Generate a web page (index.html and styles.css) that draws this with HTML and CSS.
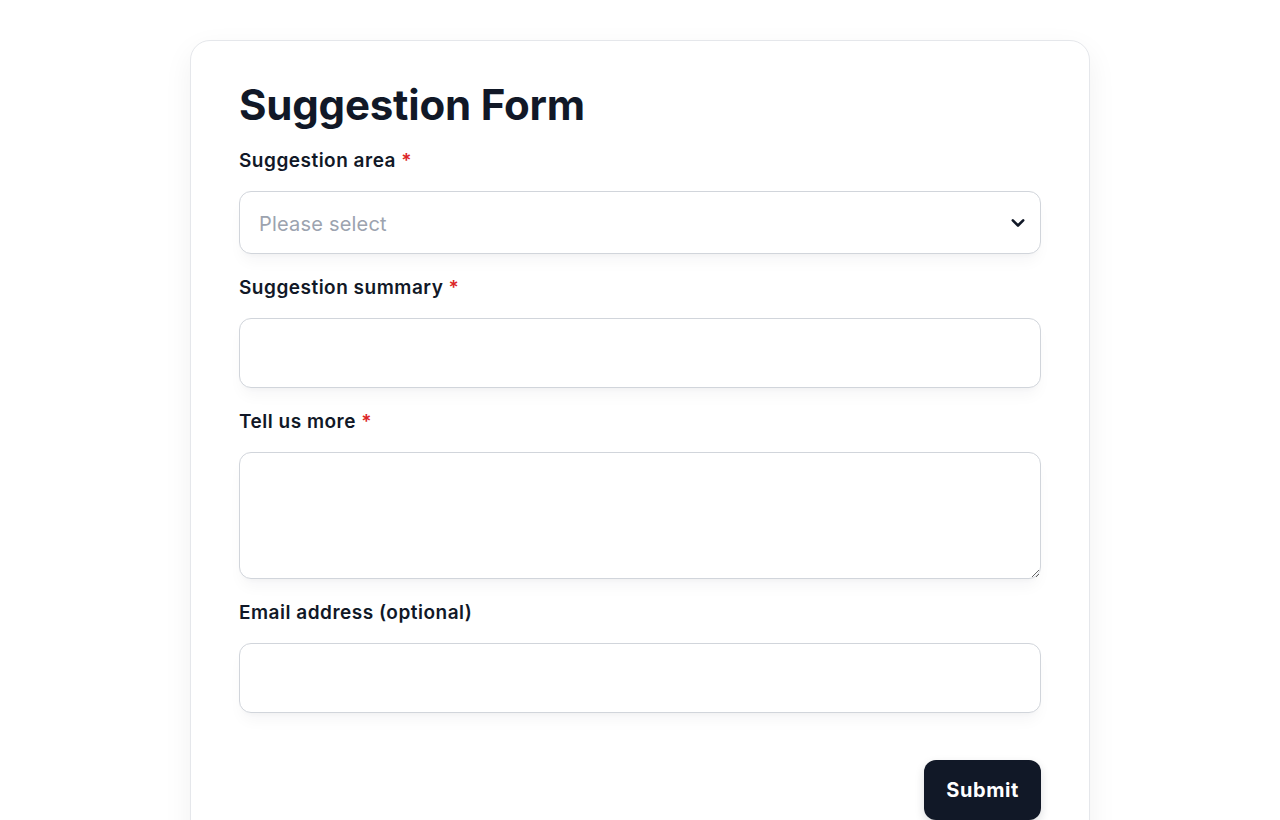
FILE: index.html
```html
<!DOCTYPE html>
<html lang="en">
<head>
<meta charset="utf-8">
<title>Suggestion Form</title>
<link rel="stylesheet" href="styles.css">
</head>
<body>
<main class="card">
  <h1 class="title">Suggestion Form</h1>
  <form class="form">
    <div class="group">
      <label class="label">Suggestion area <span class="req">*</span></label>
      <div class="select">
        <span class="placeholder">Please select</span>
        <svg class="chev" width="16" height="16" viewBox="0 0 16 16" aria-hidden="true"><path d="M2.8 5.3 L8 10.5 L13.2 5.3" fill="none" stroke="#111827" stroke-width="2.6" stroke-linecap="round" stroke-linejoin="round"/></svg>
      </div>
    </div>
    <div class="group">
      <label class="label">Suggestion summary <span class="req">*</span></label>
      <input class="field" type="text">
    </div>
    <div class="group">
      <label class="label">Tell us more <span class="req">*</span></label>
      <textarea class="field area"></textarea>
    </div>
    <div class="group">
      <label class="label">Email address (optional)</label>
      <input class="field" type="email">
    </div>
    <div class="actions">
      <button class="submit" type="button">Submit</button>
    </div>
  </form>
</main>
</body>
</html>
```

FILE: styles.css
```css
html, body {
  margin: 0;
  padding: 0;
  background: #ffffff;
}
body {
  font-family: "Inter", "Liberation Sans", sans-serif;
  color: #111827;
}
.card {
  box-sizing: border-box;
  width: 900px;
  margin: 40px auto 0;
  padding: 36px 48px 48px;
  background: #fff;
  border: 1px solid #e5e7eb;
  border-radius: 20px;
  box-shadow: 0 10px 30px rgba(17, 24, 39, 0.06);
}
.title {
  margin: 0 0 14px;
  font-size: 42px;
  line-height: 56px;
  font-weight: 700;
  letter-spacing: -0.2px;
  color: #111827;
}
.form {
  display: flex;
  flex-direction: column;
  gap: 20px;
}
.group {
  display: flex;
  flex-direction: column;
  gap: 16px;
}
.label {
  font-size: 19px;
  line-height: 28px;
  font-weight: 600;
  letter-spacing: 0.5px;
  color: #111827;
}
.req {
  color: #dc2626;
}
.select, .field {
  box-sizing: border-box;
  width: 100%;
  border: 1px solid #d1d5db;
  border-radius: 12px;
  background: #fff;
  box-shadow: 0 10px 15px -3px rgba(17, 24, 39, 0.04), 0 4px 6px -4px rgba(17, 24, 39, 0.04);
  font-family: inherit;
  font-size: 20px;
}
.select {
  height: 63px;
  display: flex;
  align-items: center;
  justify-content: space-between;
  padding: 3px 14px 0 19px;
}
.placeholder {
  color: #9ca3af;
  font-size: 20px;
  letter-spacing: 0.2px;
}
.chev {
  display: block;
  margin-top: -3px;
}
.field {
  height: 70px;
  padding: 0 19px;
  outline: none;
}
.area {
  height: 127px;
  display: block;
  resize: vertical;
  padding: 12px 19px;
}
.actions {
  display: flex;
  justify-content: flex-end;
  padding-top: 27px;
}
.submit {
  height: 60px;
  padding: 0 22px;
  border: none;
  border-radius: 12px;
  background: #111827;
  color: #fff;
  font-family: inherit;
  font-size: 20px;
  font-weight: 700;
  letter-spacing: 0.6px;
  box-shadow: 0 4px 10px rgba(17, 24, 39, 0.15);
  cursor: pointer;
}
```
